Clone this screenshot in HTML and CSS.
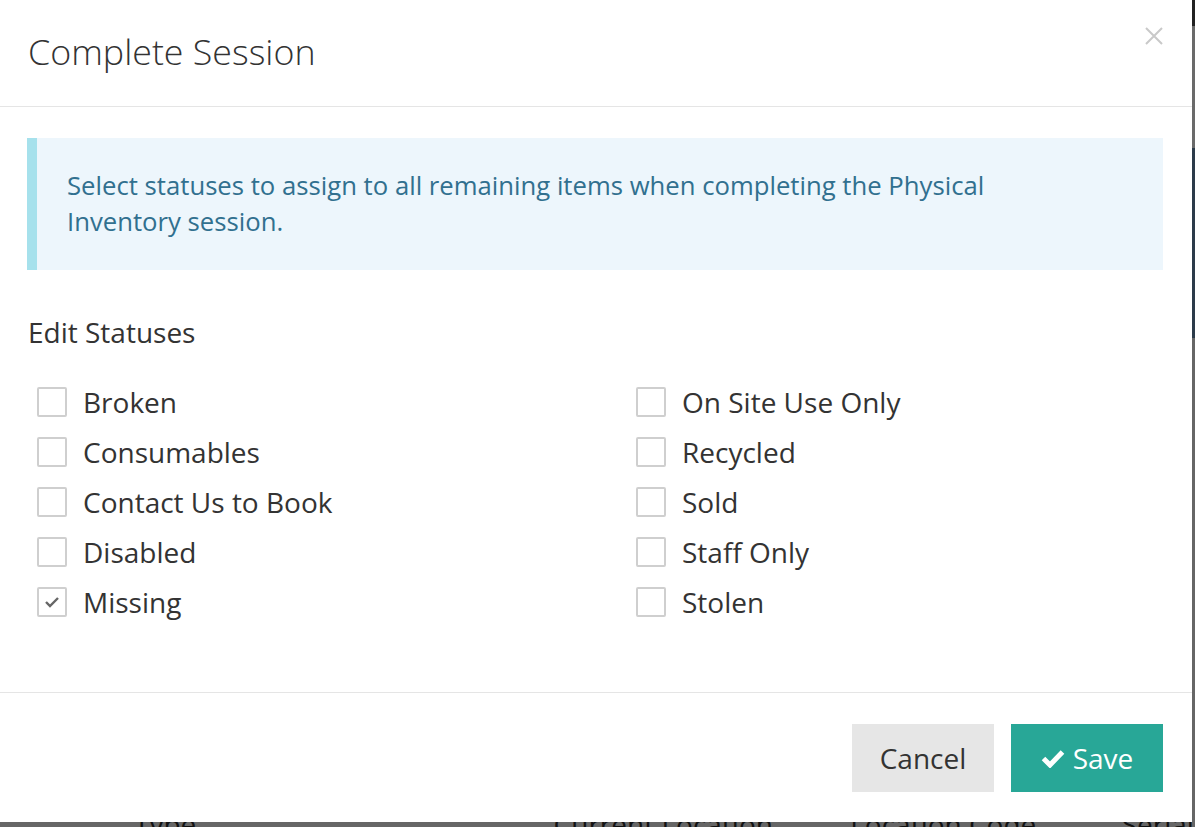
FILE: index.html
```html
<!DOCTYPE html>
<html lang="en">
  <head>
    <meta charset="UTF-8" />
    <meta name="viewport" content="width=device-width, initial-scale=1" />
    <title>Complete Session</title>
    <link rel="stylesheet" href="styles.css">
  </head>
  <body>
    <div class="modal">
      <div class="modal-header">
        <h4 class="modal-title">Complete Session</h4>
        <button class="close" aria-label="Close">
          <svg width="18" height="18" viewBox="0 0 18 18">
            <path d="M1 1 L17 17 M17 1 L1 17" stroke="#c9c9c9" stroke-width="2" fill="none" />
          </svg>
        </button>
      </div>

      <div class="modal-body">
        <div class="alert-info">
          Select statuses to assign to all remaining items when completing the Physical
          Inventory session.
        </div>

        <div class="section-label">Edit Statuses</div>

        <div class="status-grid">
          <div class="status-col">
            <label class="check"><span class="box"></span>Broken</label>
            <label class="check"><span class="box"></span>Consumables</label>
            <label class="check"><span class="box"></span>Contact Us to Book</label>
            <label class="check"><span class="box"></span>Disabled</label>
            <label class="check">
              <span class="box">
                <svg width="18" height="14" viewBox="0 0 18 14">
                  <path d="M3 7 L7 11 L15 3" stroke="#666" stroke-width="2.4" fill="none" />
                </svg>
              </span>Missing</label>
          </div>
          <div class="status-col">
            <label class="check"><span class="box"></span>On Site Use Only</label>
            <label class="check"><span class="box"></span>Recycled</label>
            <label class="check"><span class="box"></span>Sold</label>
            <label class="check"><span class="box"></span>Staff Only</label>
            <label class="check"><span class="box"></span>Stolen</label>
          </div>
        </div>
      </div>

      <div class="modal-footer">
        <button class="btn btn-default">Cancel</button>
        <button class="btn btn-save">
          <svg width="24" height="20" viewBox="0 0 24 20">
            <path d="M2.5 10.5 L9 17 L21.5 4" stroke="#fff" stroke-width="5" fill="none" />
          </svg>
          Save
        </button>
      </div>
    </div>

    <div class="behind">
      <span class="th th-type">Type</span>
      <span class="th th-loc">Current Location</span>
      <span class="th th-code">Location Code</span>
      <span class="th th-serial">Serial N</span>
    </div>
  </body>
</html>
```

FILE: styles.css
```css
body {
  margin: 0;
  background: linear-gradient(
    to bottom,
    #222 0,
    #222 26px,
    #6a6a6a 26px,
    #6a6a6a 148px,
    #2c3b4a 148px,
    #2c3b4a 338px,
    #666 338px
  );
  font-family: "Open Sans", "Noto Sans", sans-serif;
  color: #333;
  overflow: hidden;
  height: 827px;
}
.modal {
  position: relative;
  z-index: 2;
  width: 1192px;
  height: 822px;
  background: #fff;
  box-sizing: border-box;
}
.modal-header {
  height: 106px;
  border-bottom: 1px solid #e5e5e5;
  display: flex;
  justify-content: space-between;
  align-items: flex-start;
  padding: 0 29px 0 28px;
}
.modal-title {
  margin: 0;
  padding-top: 27px;
  font-size: 35.8px;
  font-weight: 300;
  line-height: 48px;
  color: #333;
}
.close {
  background: none;
  border: none;
  padding: 0;
  margin-top: 27px;
  cursor: pointer;
  line-height: 0;
}
.modal-body {
  padding: 31px 29px 0 27px;
  height: 586px;
  box-sizing: border-box;
  border-bottom: 1px solid #e5e5e5;
}
.alert-info {
  background: #edf6fc;
  border-left: 10px solid #a6e1ec;
  color: #31708f;
  font-size: 25.7px;
  line-height: 36px;
  padding: 30px 70px 30px 30px;
  height: 72px;
}
.section-label {
  margin-top: 44px;
  margin-left: 1px;
  font-size: 28px;
  line-height: 36px;
}
.status-grid {
  display: grid;
  grid-template-columns: 599px 1fr;
  margin-top: 27px;
}
.status-col {
  display: flex;
  flex-direction: column;
}
.check {
  display: flex;
  align-items: center;
  height: 50px;
  font-size: 28px;
  color: #333;
  padding-left: 10px;
}
.box {
  width: 26px;
  height: 26px;
  border: 2px solid #cfcfcf;
  border-radius: 2px;
  margin-right: 16px;
  display: flex;
  align-items: center;
  justify-content: center;
  flex-shrink: 0;
}
.modal-footer {
  display: flex;
  justify-content: flex-end;
  gap: 17px;
  padding: 31px 29px 0 0;
}
.btn {
  height: 68px;
  border: none;
  border-radius: 0;
  font-family: "Open Sans", "Noto Sans", sans-serif;
  font-size: 28px;
  display: flex;
  align-items: center;
  justify-content: center;
  gap: 8px;
  cursor: pointer;
}
.btn-default {
  width: 142px;
  background: #e6e6e6;
  color: #333;
}
.btn-save {
  width: 152px;
  background: #28a797;
  color: #fff;
}
.behind {
  position: relative;
  z-index: 1;
  margin-top: -12px;
  height: 17px;
  width: 1195px;
  overflow: hidden;
  font-size: 28px;
  line-height: 28px;
  color: #111;
  white-space: nowrap;
}
.th {
  display: inline-block;
}
.th-type {
  margin-left: 134px;
}
.th-loc {
  margin-left: 350px;
}
.th-code {
  margin-left: 70px;
}
.th-serial {
  margin-left: 78px;
}
```
